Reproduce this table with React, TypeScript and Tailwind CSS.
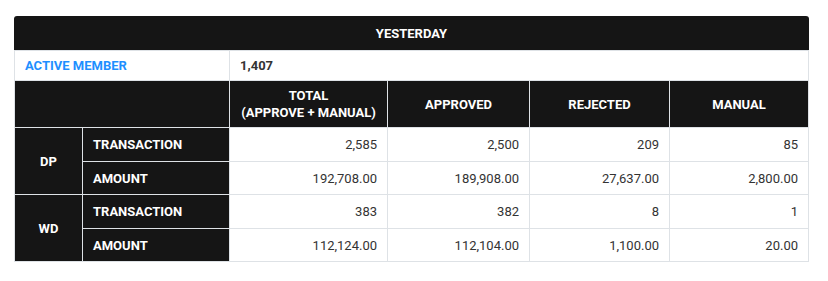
import React from 'react';

const dark = 'bg-[#151515] text-white font-bold';
const line = 'border border-[#dee2e6]';

type Row = { label: string; values: string[] };

const groups: { name: string; rows: Row[] }[] = [
  {
    name: 'DP',
    rows: [
      { label: 'TRANSACTION', values: ['2,585', '2,500', '209', '85'] },
      { label: 'AMOUNT', values: ['192,708.00', '189,908.00', '27,637.00', '2,800.00'] },
    ],
  },
  {
    name: 'WD',
    rows: [
      { label: 'TRANSACTION', values: ['383', '382', '8', '1'] },
      { label: 'AMOUNT', values: ['112,124.00', '112,104.00', '1,100.00', '20.00'] },
    ],
  },
];

export default function App() {
  return (
    <div className="bg-white min-h-[281px] pt-4 pl-[14px] font-['Roboto',sans-serif] text-[13px] leading-[15px]">
      <div className="w-[795px]">
        <div className="h-[34px] rounded-t-[3px] bg-[#151515] text-white font-bold flex items-center justify-center">
          YESTERDAY
        </div>
        <table className="w-[795px] table-fixed border-collapse">
          <colgroup>
            <col className="w-[68px]" />
            <col className="w-[147px]" />
            <col className="w-[158px]" />
            <col className="w-[142px]" />
            <col className="w-[140px]" />
            <col />
          </colgroup>
          <tbody>
            <tr className="h-[30px]">
              <td colSpan={2} className={`${line} px-2.5 font-bold text-[#1e8fff]`}>ACTIVE MEMBER</td>
              <td colSpan={4} className={`${line} px-2.5 font-bold text-[#333]`}>1,407</td>
            </tr>
            <tr className="h-[47px]">
              <th colSpan={2} className={`${line} ${dark}`} />
              <th className={`${line} ${dark} text-center leading-[17px]`}>
                TOTAL
                <br />
                (APPROVE + MANUAL)
              </th>
              <th className={`${line} ${dark} text-center`}>APPROVED</th>
              <th className={`${line} ${dark} text-center`}>REJECTED</th>
              <th className={`${line} ${dark} text-center`}>MANUAL</th>
            </tr>
            {groups.map((g) =>
              g.rows.map((r, i) => (
                <tr key={g.name + r.label} className={i === 0 ? 'h-[34px]' : 'h-[33px]'}>
                  {i === 0 && (
                    <th rowSpan={2} className={`${line} ${dark} text-center`}>
                      {g.name}
                    </th>
                  )}
                  <th className={`${line} ${dark} text-left px-2.5`}>{r.label}</th>
                  {r.values.map((v, j) => (
                    <td key={j} className={`${line} px-2.5 text-right text-[#333]`}>
                      {v}
                    </td>
                  ))}
                </tr>
              ))
            )}
          </tbody>
        </table>
      </div>
    </div>
  );
}
